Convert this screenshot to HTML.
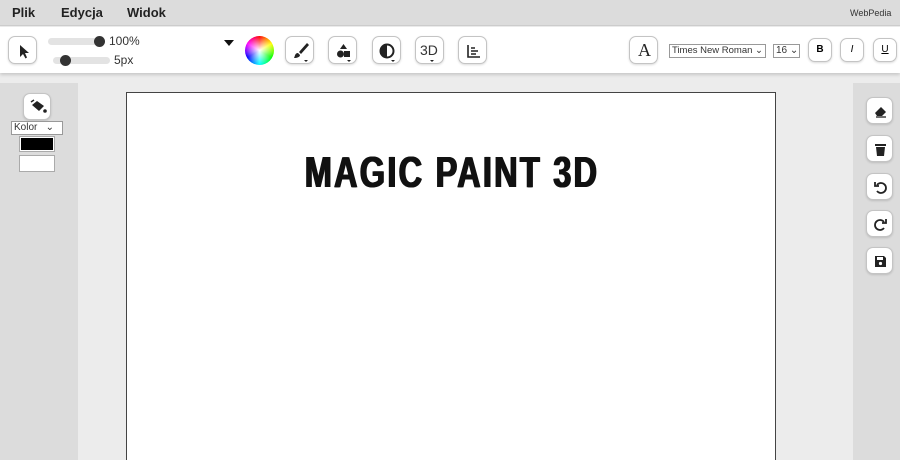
<!DOCTYPE html>
<html><head><meta charset="utf-8"><style>
*{box-sizing:border-box;margin:0;padding:0}
html,body{width:900px;height:460px;overflow:hidden}
body{background:#ececec;font-family:"Liberation Sans",sans-serif;position:relative}
.menu{position:absolute;left:0;top:0;width:900px;height:26px;background:#dcdcdc;border-bottom:1px solid #ccc}
.menu span{position:absolute;top:5px;font-size:13px;font-weight:bold;color:#222}
.tb{position:absolute;left:0;top:27px;width:900px;height:46px;background:#fff;box-shadow:0 2px 3px rgba(0,0,0,.15)}
.btn{position:absolute;width:29px;height:28px;border:1px solid #c4c4c4;border-radius:7px;background:#fff;box-shadow:0 1px 2px rgba(0,0,0,.15)}
.btn svg{position:absolute;left:0;top:0}
.lp{position:absolute;left:0;top:83px;width:78px;height:377px;background:#dcdcdc}
.rp{position:absolute;left:853px;top:83px;width:47px;height:377px;background:#dcdcdc}
.canvas{position:absolute;left:126px;top:92px;width:650px;height:370px;background:#fff;border:1px solid #444;border-bottom:none}
.title{position:absolute;left:0;width:650px;top:55px;text-align:center;font-weight:bold;font-size:44px;letter-spacing:3px;color:#111;transform:scaleX(0.74);white-space:nowrap;text-shadow:1px 0 #111,-1px 0 #111}
.sel{position:absolute;border:1px solid #999;font-size:10px;color:#333;height:14px;line-height:12px;padding-left:2px;background:#fff;white-space:nowrap;overflow:hidden}
.track{position:absolute;height:7px;background:#e3e3e3;border-radius:4px}
.knob{position:absolute;width:11px;height:11px;border-radius:50%;background:#333}
</style></head><body>
<div class="menu"><span style="left:12px">Plik</span><span style="left:61px">Edycja</span><span style="left:127px">Widok</span><span style="left:850px;font-size:9px;font-weight:normal;top:8px;color:#333">WebPedia</span></div>
<div class="tb">
 <div class="btn" style="left:8px;top:9px"><svg width="29" height="28"><path d="M11 8 L11 20 L14 17 L16.5 21.5 L18 20.5 L16 16 L20 16 Z" fill="#222"/></svg></div>
 <div class="track" style="left:48px;top:11px;width:55px"></div><div class="knob" style="left:94px;top:9px"></div>
 <span style="position:absolute;left:109px;top:7px;font-size:12px;color:#333">100%</span>
 <div class="track" style="left:53px;top:30px;width:57px"></div><div class="knob" style="left:60px;top:28px"></div>
 <span style="position:absolute;left:114px;top:26px;font-size:12px;color:#333">5px</span>
 <div style="position:absolute;left:224px;top:13px;border-left:5px solid transparent;border-right:5px solid transparent;border-top:6px solid #111"></div>
 <div style="position:absolute;left:245px;top:9px;width:29px;height:29px;border-radius:50%;background:conic-gradient(red,#ff0,lime,cyan,blue,#f0f,red)"><div style="position:absolute;inset:0;border-radius:50%;background:radial-gradient(#fff 0,rgba(255,255,255,0) 70%)"></div></div>
 <div class="btn" style="left:285px;top:9px"><svg width="29" height="28"><path d="M21 6 L13 15 L15 17 L23 8 Z M12 16 C9 16 9 19 8 21 C11 21 14 20 14 18 Z" fill="#222"/><path d="M18 23 l4 0 l-2 2z" fill="#222"/></svg></div>
 <div class="btn" style="left:328px;top:9px"><svg width="29" height="28"><path d="M14.5 7 L18 12 L11 12 Z" fill="#222"/><circle cx="11.5" cy="17" r="3.5" fill="#222"/><rect x="15" y="14" width="6" height="6" fill="#222"/><path d="M18 23 l4 0 l-2 2z" fill="#222"/></svg></div>
 <div class="btn" style="left:372px;top:9px"><svg width="29" height="28"><circle cx="14" cy="14" r="6.5" fill="none" stroke="#222" stroke-width="2"/><path d="M14 7.5 A6.5 6.5 0 0 0 14 20.5 Z" fill="#222"/><path d="M18 23 l4 0 l-2 2z" fill="#222"/></svg></div>
 <div class="btn" style="left:415px;top:9px"><span style="position:absolute;left:4px;top:5px;font-size:14px;color:#333">3D</span><svg width="29" height="28"><path d="M14 23 l4 0 l-2 2z" fill="#222"/></svg></div>
 <div class="btn" style="left:458px;top:9px"><svg width="29" height="28"><path d="M9 8 V20 H21" fill="none" stroke="#222" stroke-width="1.6"/><path d="M12 11 H16 M12 14 H19 M12 17 H17" stroke="#222" stroke-width="1.6"/></svg></div>
 <div class="btn" style="left:629px;top:9px"><span style="position:absolute;left:8px;top:3px;font-family:'Liberation Serif',serif;font-size:18px;color:#222">A</span></div>
 <div class="sel" style="left:669px;top:17px;width:97px;font-size:9.5px">Times New Roman ⌄</div>
 <div class="sel" style="left:773px;top:17px;width:27px">16 ⌄</div>
 <div class="btn" style="left:808px;top:11px;width:24px;height:24px;font-size:10px;font-weight:bold;text-align:center;line-height:22px">B</div>
 <div class="btn" style="left:840px;top:11px;width:24px;height:24px;font-size:10px;font-style:italic;text-align:center;line-height:22px">I</div>
 <div class="btn" style="left:873px;top:11px;width:24px;height:24px;font-size:10px;text-decoration:underline;text-align:center;line-height:22px">U</div>
</div>
<div class="lp">
 <div class="btn" style="left:23px;top:10px;width:28px;height:27px"><svg width="28" height="27"><path d="M8 11 L13 7 L20 12 L15 17 Z" fill="#222"/><path d="M7 8 L10 6" stroke="#222" stroke-width="1.5"/><circle cx="21" cy="17" r="1.8" fill="#222"/></svg></div>
 <div class="sel" style="left:11px;top:38px;width:52px;font-size:10px">Kolor &nbsp; ⌄</div>
 <div style="position:absolute;left:19px;top:53px;width:36px;height:16px;border:1px solid #aaa;background:#fff;padding:1px"><div style="background:#000;height:100%"></div></div>
 <div style="position:absolute;left:19px;top:72px;width:36px;height:17px;border:1px solid #aaa;background:#fff"></div>
</div>
<div class="rp">
 <div class="btn" style="left:13px;top:14px;width:27px;height:27px"><svg width="27" height="27"><path d="M8 15 L14 9 L19 14 L15 18 H10 Z" fill="#222"/><path d="M9 19 H19" stroke="#222" stroke-width="1.3"/></svg></div>
 <div class="btn" style="left:13px;top:52px;width:27px;height:27px"><svg width="27" height="27"><rect x="8" y="8" width="11" height="2" fill="#222"/><path d="M9 11 H18 L17 20 H10 Z" fill="#222"/></svg></div>
 <div class="btn" style="left:13px;top:90px;width:27px;height:27px"><svg width="27" height="27"><path d="M10 11 A5 5 0 1 1 10 17" fill="none" stroke="#222" stroke-width="1.8"/><path d="M8 8 V12 H12" fill="none" stroke="#222" stroke-width="1.8"/></svg></div>
 <div class="btn" style="left:13px;top:127px;width:27px;height:27px"><svg width="27" height="27"><path d="M17 11 A5 5 0 1 0 17 17" fill="none" stroke="#222" stroke-width="1.8"/><path d="M19 8 V12 H15" fill="none" stroke="#222" stroke-width="1.8"/></svg></div>
 <div class="btn" style="left:13px;top:164px;width:27px;height:27px"><svg width="27" height="27"><path d="M8 8 H17 L19 10 V19 H8 Z" fill="#222"/><rect x="10" y="9" width="6" height="3" fill="#fff"/><circle cx="13.5" cy="15.5" r="1.6" fill="#fff"/></svg></div>
</div>
<div class="canvas"><div class="title">MAGIC PAINT 3D</div></div>
</body></html>
